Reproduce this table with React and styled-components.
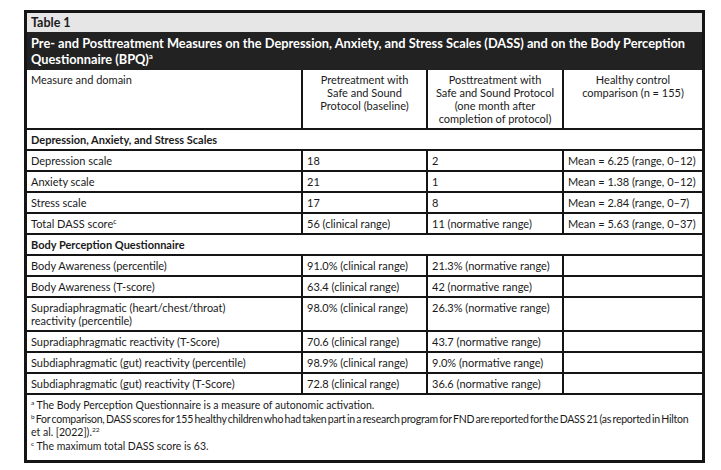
import React from 'react'
import styled, { createGlobalStyle } from 'styled-components'

const Global = createGlobalStyle`
  body {
    margin: 0;
    background: #fff;
    font-family: Lato, "Open Sans", "Liberation Sans", sans-serif;
    color: #1a1a1a;
  }
`

const Frame = styled.div`
  width: 681px;
  margin: 10px 0 0 24px;
  border: 3px solid #151515;
  box-sizing: border-box;
  background: #fff;
`

const Label = styled.div`
  background: #e6e6e6;
  font-weight: 700;
  font-size: 12.5px;
  line-height: 19px;
  padding: 0 4px;
`

const Title = styled.div`
  background: #222;
  color: #fff;
  font-weight: 700;
  font-size: 12.8px;
  line-height: 16px;
  padding: 3px 4px 3px;

  sup {
    font-size: 8px;
    vertical-align: 5px;
    line-height: 0;
  }
`

const Table = styled.table`
  width: 100%;
  border-collapse: collapse;
  table-layout: fixed;
  font-size: 11px;
  line-height: 13px;

  sup {
    font-size: 7px;
    vertical-align: 4px;
    line-height: 0;
  }
`

const Cell = styled.td`
  border: 2px solid #151515;
  padding: 3px 4px 3px;
  vertical-align: top;
  text-align: ${p => (p.$center ? 'center' : 'left')};
  font-weight: ${p => (p.$bold ? 700 : 400)};
  height: ${p => (p.$tall ? '52px' : 'auto')};

  tr:first-child > & { border-top: none; }
  &:first-child { border-left: none; }
  &:last-child { border-right: none; }
`

const Notes = styled.td`
  padding: 4px 4px 7px;
  font-size: 10.5px;
  line-height: 13.5px;
  border-top: 2px solid #151515;

  p { margin: 0; }
  sup {
    font-size: 6.5px;
    vertical-align: 4px;
    line-height: 0;
  }
`

const Tight = styled.p`
  letter-spacing: -0.25px;
  word-spacing: -1px;
  white-space: nowrap;
`

const dass = [
  ['Depression scale', '18', '2', 'Mean = 6.25 (range, 0–12)'],
  ['Anxiety scale', '21', '1', 'Mean = 1.38 (range, 0–12)'],
  ['Stress scale', '17', '8', 'Mean = 2.84 (range, 0–7)'],
  [<>Total DASS score<sup>c</sup></>, '56 (clinical range)', '11 (normative range)', 'Mean = 5.63 (range, 0–37)'],
]

const bpq = [
  ['Body Awareness (percentile)', '91.0% (clinical range)', '21.3% (normative range)', ''],
  ['Body Awareness (T-score)', '63.4 (clinical range)', '42 (normative range)', ''],
  [<>Supradiaphragmatic (heart/chest/throat)<br />reactivity (percentile)</>, '98.0% (clinical range)', '26.3% (normative range)', ''],
  ['Supradiaphragmatic reactivity (T-Score)', '70.6 (clinical range)', '43.7 (normative range)', ''],
  ['Subdiaphragmatic (gut) reactivity (percentile)', '98.9% (clinical range)', '9.0% (normative range)', ''],
  ['Subdiaphragmatic (gut) reactivity (T-Score)', '72.8 (clinical range)', '36.6 (normative range)', ''],
]

const Row = ({ cells }) => (
  <tr>
    {cells.map((c, i) => (
      <Cell key={i}>{c}</Cell>
    ))}
  </tr>
)

export default function App() {
  return (
    <>
      <Global />
      <Frame>
        <Label>Table 1</Label>
        <Title>
          Pre- and Posttreatment Measures on the Depression, Anxiety, and Stress Scales (DASS) and on the Body Perception
          Questionnaire (BPQ)<sup>a</sup>
        </Title>
        <Table>
          <colgroup>
            <col style={{ width: 275 }} />
            <col style={{ width: 125 }} />
            <col style={{ width: 136 }} />
            <col />
          </colgroup>
          <tbody>
            <tr>
              <Cell $tall>Measure and domain</Cell>
              <Cell $center>Pretreatment with<br />Safe and Sound<br />Protocol (baseline)</Cell>
              <Cell $center>Posttreatment with<br />Safe and Sound Protocol<br />(one month after<br />completion of protocol)</Cell>
              <Cell $center>Healthy control<br />comparison (n = 155)</Cell>
            </tr>
            <tr>
              <Cell $bold colSpan={4}>Depression, Anxiety, and Stress Scales</Cell>
            </tr>
            {dass.map((r, i) => <Row key={i} cells={r} />)}
            <tr>
              <Cell $bold colSpan={4}>Body Perception Questionnaire</Cell>
            </tr>
            {bpq.map((r, i) => <Row key={i} cells={r} />)}
            <tr>
              <Notes colSpan={4}>
                <p><sup>a</sup> The Body Perception Questionnaire is a measure of autonomic activation.</p>
                <Tight>
                  <sup>b</sup> For comparison, DASS scores for 155 healthy children who had taken part in a research program for FND are reported for the DASS 21 (as reported in Hilton
                </Tight>
                <p>et al. [2022]).<sup>22</sup></p>
                <p><sup>c</sup> The maximum total DASS score is 63.</p>
              </Notes>
            </tr>
          </tbody>
        </Table>
      </Frame>
    </>
  )
}
